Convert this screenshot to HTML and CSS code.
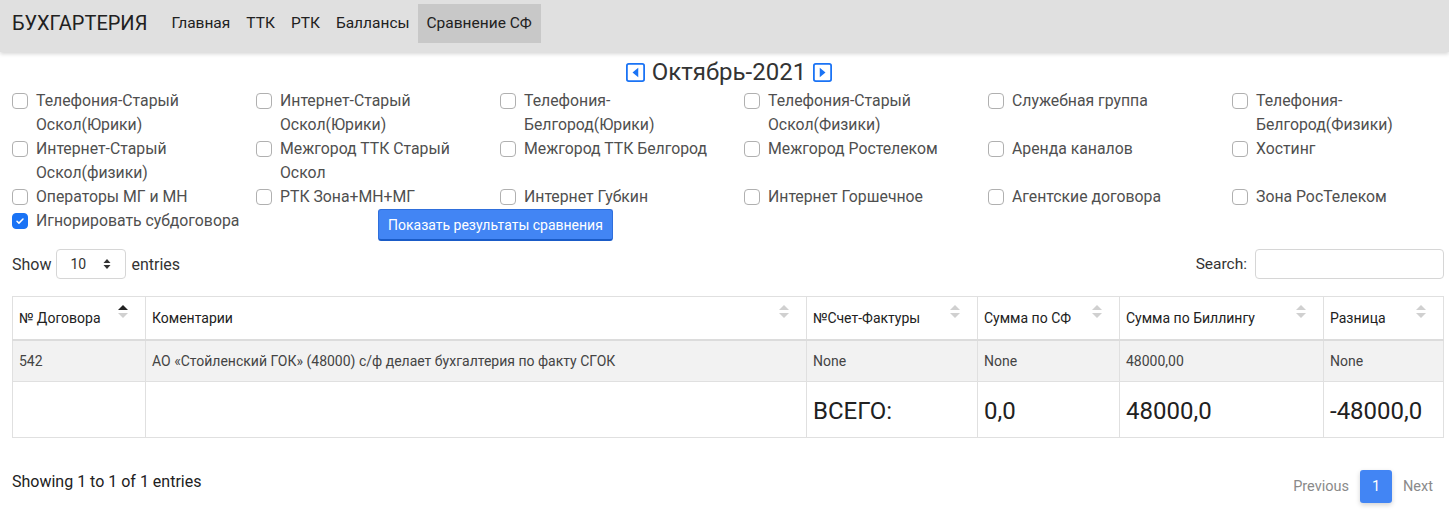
FILE: index.html
```html
<!DOCTYPE html>
<html lang="ru">
<head>
<meta charset="utf-8">
<title>Бухгалтерия</title>
<link rel="stylesheet" href="styles.css">
</head>
<body>
<nav class="navbar">
  <span class="brand">БУХГАРТЕРИЯ</span>
  <a class="nav-link">Главная</a>
  <a class="nav-link">ТТК</a>
  <a class="nav-link">РТК</a>
  <a class="nav-link">Баллансы</a>
  <a class="nav-link active">Сравнение СФ</a>
</nav>

<main class="page">
  <div class="month">
    <svg class="month-icon" viewBox="0 0 16 16" width="19" height="19"><rect x="0.75" y="0.75" width="14.5" height="14.5" rx="1.6" fill="none" stroke="#1a73f5" stroke-width="1.5"/><path d="M10.3 4v8L5.5 8z" fill="#1a73f5"/></svg>
    <span class="month-text">Октябрь-2021</span>
    <svg class="month-icon" viewBox="0 0 16 16" width="19" height="19"><rect x="0.75" y="0.75" width="14.5" height="14.5" rx="1.6" fill="none" stroke="#1a73f5" stroke-width="1.5"/><path d="M5.7 4v8l4.8-4z" fill="#1a73f5"/></svg>
  </div>

  <div class="checks">
    <label class="check"><span class="box"></span><span class="lbl">Телефония-Старый Оскол(Юрики)</span></label>
    <label class="check"><span class="box"></span><span class="lbl">Интернет-Старый Оскол(Юрики)</span></label>
    <label class="check"><span class="box"></span><span class="lbl">Телефония-Белгород(Юрики)</span></label>
    <label class="check"><span class="box"></span><span class="lbl">Телефония-Старый Оскол(Физики)</span></label>
    <label class="check"><span class="box"></span><span class="lbl">Служебная группа</span></label>
    <label class="check"><span class="box"></span><span class="lbl">Телефония-Белгород(Физики)</span></label>

    <label class="check"><span class="box"></span><span class="lbl">Интернет-Старый Оскол(физики)</span></label>
    <label class="check"><span class="box"></span><span class="lbl">Межгород ТТК Старый Оскол</span></label>
    <label class="check"><span class="box"></span><span class="lbl">Межгород ТТК Белгород</span></label>
    <label class="check"><span class="box"></span><span class="lbl">Межгород Ростелеком</span></label>
    <label class="check"><span class="box"></span><span class="lbl">Аренда каналов</span></label>
    <label class="check"><span class="box"></span><span class="lbl">Хостинг</span></label>

    <label class="check"><span class="box"></span><span class="lbl">Операторы МГ и МН</span></label>
    <label class="check"><span class="box"></span><span class="lbl">РТК Зона+МН+МГ</span></label>
    <label class="check"><span class="box"></span><span class="lbl">Интернет Губкин</span></label>
    <label class="check"><span class="box"></span><span class="lbl">Интернет Горшечное</span></label>
    <label class="check"><span class="box"></span><span class="lbl">Агентские договора</span></label>
    <label class="check"><span class="box"></span><span class="lbl">Зона РосТелеком</span></label>
  </div>

  <div class="action-row">
    <label class="check ignore"><span class="box checked"><svg viewBox="0 0 16 16" width="12" height="12"><path d="M4 8.3l2.6 2.5L12 5.4" fill="none" stroke="#fff" stroke-width="2" stroke-linecap="round" stroke-linejoin="round"/></svg></span><span class="lbl">Игнорировать субдоговора</span></label>
    <button class="btn-primary">Показать результаты сравнения</button>
  </div>

  <div class="dt-top">
    <div class="dt-length">Show
      <span class="select">10<svg viewBox="0 0 8 12" width="8" height="12"><path d="M4 1l3.5 4h-7z M4 11l3.5-4h-7z" fill="#333"/></svg></span>
      entries</div>
    <div class="dt-search">Search: <span class="search-input"></span></div>
  </div>

  <table class="dt">
    <colgroup>
      <col class="c1"><col class="c2"><col class="c3"><col class="c4"><col class="c5"><col class="c6">
    </colgroup>
    <thead>
      <tr>
        <th>№ Договора<span class="sort asc"></span></th>
        <th>Коментарии<span class="sort"></span></th>
        <th>№Счет-Фактуры<span class="sort"></span></th>
        <th>Сумма по СФ<span class="sort"></span></th>
        <th>Сумма по Биллингу<span class="sort"></span></th>
        <th>Разница<span class="sort"></span></th>
      </tr>
    </thead>
    <tbody>
      <tr class="data">
        <td>542</td>
        <td>АО «Стойленский ГОК» (48000) с/ф делает бухгалтерия по факту СГОК</td>
        <td>None</td>
        <td>None</td>
        <td>48000,00</td>
        <td>None</td>
      </tr>
      <tr class="total">
        <td></td>
        <td></td>
        <td>ВСЕГО:</td>
        <td>0,0</td>
        <td>48000,0</td>
        <td>-48000,0</td>
      </tr>
    </tbody>
  </table>

  <div class="dt-bottom">
    <div class="dt-info">Showing 1 to 1 of 1 entries</div>
    <div class="pager">
      <span class="pg">Previous</span>
      <span class="pg current">1</span>
      <span class="pg">Next</span>
    </div>
  </div>
</main>
</body>
</html>
```

FILE: styles.css
```css
* { box-sizing: border-box; }
html, body { margin: 0; padding: 0; }
body {
  font-family: Roboto, "Noto Sans", Arial, sans-serif;
  color: #4f4f4f;
  background: #fff;
  width: 1449px;
  height: 514px;
  overflow: hidden;
}

.navbar {
  height: 52px;
  background: #e0e0e0;
  display: flex;
  align-items: flex-start;
  padding: 4px 0 0 12px;
  box-shadow: 0 2px 4px rgba(0,0,0,0.16);
  position: relative;
  z-index: 1;
}
.brand {
  font-size: 20px;
  color: #212121;
  line-height: 39px;
  margin-right: 16px;
}
.nav-link {
  font-size: 15.5px;
  color: #212121;
  line-height: 39px;
  padding: 0 8px;
}
.nav-link.active { background: #c8c8c8; padding: 0 9px; }

.page { padding: 0 5px 0 12px; }

.month {
  display: flex;
  justify-content: center;
  align-items: center;
  gap: 7px;
  height: 37px;
  padding-top: 3px;
  margin-left: 2px;
}
.month-text { font-size: 24px; color: #333; }
.month-icon { display: block; }

.checks {
  display: grid;
  grid-template-columns: repeat(6, 224px);
  column-gap: 20px;
  grid-auto-rows: 48px;
  grid-template-rows: 48px 48px 24px;
}
.check {
  display: flex;
  align-items: flex-start;
  font-size: 15.8px;
  line-height: 24px;
  color: #4f4f4f;
}
.box {
  flex: none;
  width: 16px;
  height: 16px;
  border: 1.5px solid #b0b0b0;
  border-radius: 4px;
  margin: 4px 8px 0 0;
  display: flex;
  align-items: center;
  justify-content: center;
}
.box.checked { background: #1a73f5; border-color: #1a73f5; }
.lbl { max-width: 200px; }

.action-row {
  display: flex;
  align-items: flex-start;
  height: 31px;
}
.check.ignore { width: 366px; }
.ignore .lbl { max-width: none; }
.btn-primary {
  margin-top: 0;
  height: 32px;
  padding: 0 9px;
  font-family: Roboto, Arial, sans-serif;
  font-size: 14px;
  white-space: nowrap;
  color: #fff;
  background: #4285f4;
  border: 1px solid #2f6fdc;
  border-bottom: 2px solid #1a5bc7;
  border-radius: 3px;
}

.dt-top {
  display: flex;
  justify-content: space-between;
  align-items: center;
  margin-top: 9px;
  height: 30px;
  font-size: 16px;
  color: #333;
}
.dt-length { display: flex; align-items: center; gap: 4px; }
.select {
  display: inline-flex;
  align-items: center;
  justify-content: space-between;
  width: 70px;
  height: 30px;
  border: 1px solid #d6d6d6;
  border-radius: 4px;
  padding: 0 14px 0 13px;
  font-size: 14px;
  margin: 0 1px;
}
.dt-search { display: flex; align-items: center; gap: 8px; font-size: 15.5px; }
.search-input {
  display: block;
  width: 189px;
  height: 30px;
  border: 1px solid #d6d6d6;
  border-radius: 4px;
}

.dt {
  margin-top: 17px;
  width: 1431px;
  border-collapse: collapse;
  table-layout: fixed;
  color: #333;
}
.c1 { width: 133px; }
.c2 { width: 661px; }
.c3 { width: 171px; }
.c4 { width: 142px; }
.c5 { width: 204px; }
.c6 { width: 120px; }
.dt th, .dt td {
  border: 1px solid #e0e0e0;
  padding: 0 6px;
  text-align: left;
  vertical-align: middle;
}
.dt th {
  height: 43px;
  font-size: 14px;
  font-weight: 400;
  color: #212121;
  position: relative;
  border-bottom: 2px solid #dcdcdc;
  padding-top: 1px;
}
.sort {
  position: absolute;
  right: 17px;
  top: 8px;
  width: 10px;
  height: 14px;
}
.sort::before, .sort::after {
  content: "";
  position: absolute;
  left: 0;
  border-left: 5px solid transparent;
  border-right: 5px solid transparent;
}
.sort::before { top: 0; border-bottom: 5px solid #d0d0d0; }
.sort::after { top: 8px; border-top: 5px solid #d0d0d0; }
.sort.asc::before { border-bottom-color: #222; }
.dt tr.data td {
  height: 42px;
  font-size: 14px;
  background: #f2f2f2;
  color: #444;
}
.dt tr.total td {
  height: 56px;
  font-size: 24px;
  color: #212121;
  padding-top: 2px;
}

.dt-bottom {
  display: flex;
  justify-content: space-between;
  align-items: flex-start;
  margin-top: 33px;
}
.dt-info { font-size: 16px; color: #212121; line-height: 22px; }
.pager {
  display: flex;
  align-items: center;
  margin-top: -1px;
  margin-right: 0;
}
.pg {
  font-size: 14.5px;
  color: #8a8a8a;
  padding: 0 11px;
  line-height: 33px;
}
.pg.current {
  background: #4285f4;
  color: #fff;
  width: 32px;
  padding: 0;
  text-align: center;
  border-radius: 3px;
  box-shadow: 0 2px 5px rgba(0,0,0,0.18);
}
```
